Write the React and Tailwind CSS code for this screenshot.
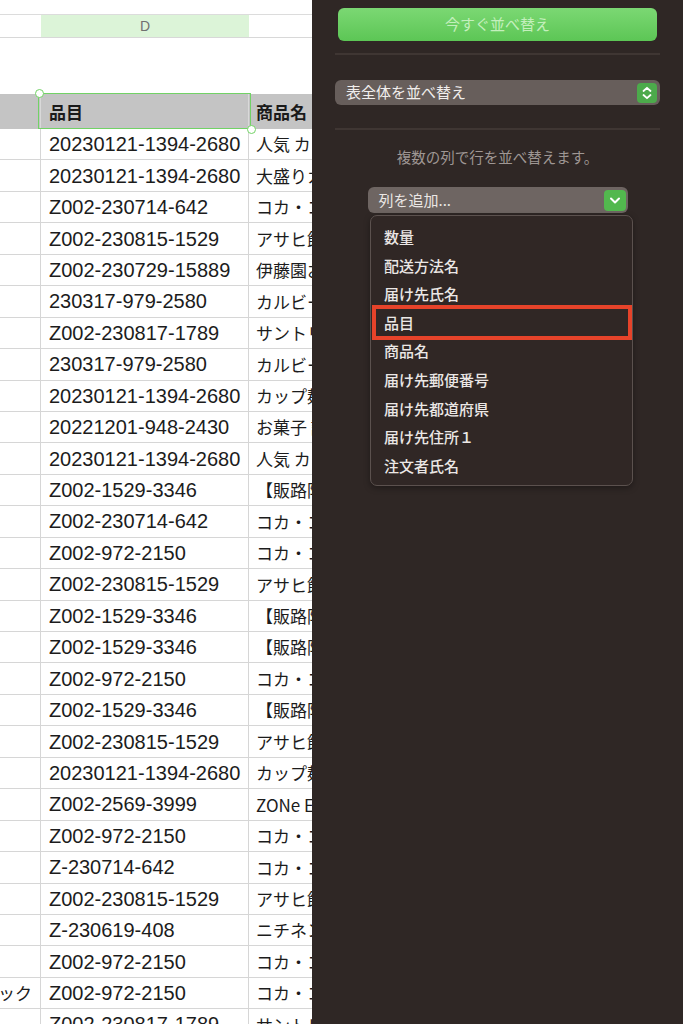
import React from "react";

const rows = [
  ["", "20230121-1394-2680", "人気 カップ麺"],
  ["", "20230121-1394-2680", "大盛りカップ"],
  ["", "Z002-230714-642", "コカ・コーラ"],
  ["", "Z002-230815-1529", "アサヒ飲料"],
  ["", "Z002-230729-15889", "伊藤園お茶"],
  ["", "230317-979-2580", "カルビーポテト"],
  ["", "Z002-230817-1789", "サントリー"],
  ["", "230317-979-2580", "カルビーポテト"],
  ["", "20230121-1394-2680", "カップ麺セット"],
  ["", "20221201-948-2430", "お菓子 詰め合わせ"],
  ["", "20230121-1394-2680", "人気 カップ麺"],
  ["", "Z002-1529-3346", "【販路限定】"],
  ["", "Z002-230714-642", "コカ・コーラ"],
  ["", "Z002-972-2150", "コカ・コーラ"],
  ["", "Z002-230815-1529", "アサヒ飲料"],
  ["", "Z002-1529-3346", "【販路限定】"],
  ["", "Z002-1529-3346", "【販路限定】"],
  ["", "Z002-972-2150", "コカ・コーラ"],
  ["", "Z002-1529-3346", "【販路限定】"],
  ["", "Z002-230815-1529", "アサヒ飲料"],
  ["", "20230121-1394-2680", "カップ麺セット"],
  ["", "Z002-2569-3999", "ZONe ENERGY"],
  ["", "Z002-972-2150", "コカ・コーラ"],
  ["", "Z-230714-642", "コカ・コーラ"],
  ["", "Z002-230815-1529", "アサヒ飲料"],
  ["", "Z-230619-408", "ニチネンコンロ"],
  ["", "Z002-972-2150", "コカ・コーラ"],
  ["ック", "Z002-972-2150", "コカ・コーラ"],
  ["", "Z002-230817-1789", "サントリー"],
];

const menuItems = [
  "数量",
  "配送方法名",
  "届け先氏名",
  "品目",
  "商品名",
  "届け先郵便番号",
  "届け先都道府県",
  "届け先住所１",
  "注文者氏名",
];

const jp = "font-['Noto_Sans_CJK_JP',sans-serif]";

function Sheet() {
  return (
    <div className="w-[312px] shrink-0 overflow-hidden bg-white">
      <div className="w-[480px]">
        <div className="h-[15px] border-b border-[#dcdcdc]" />
        <div className="flex h-[23px] border-b border-[#d8d8d8]">
          <div className="w-[41px]" />
          <div className="flex w-[208px] items-center justify-center bg-[#dcf4d8] font-['Liberation_Sans',sans-serif] text-[14px] text-[#707070]">
            D
          </div>
          <div className="flex-1" />
        </div>
        <div className="h-[56px]" />

        <div className={`relative flex h-[35px] bg-[#c4c4c4] ${jp} text-[17px] font-bold text-[#1a1a1a]`}>
          <div className="w-[41px] border-r border-[#d9d9d9]" />
          <div className="flex w-[208px] items-center border-r border-[#d9d9d9] pl-[8px]">品目</div>
          <div className="flex flex-1 items-center pl-[7px]">商品名</div>
          <div className="absolute left-[38px] top-[-1px] h-[36px] w-[213px] border-[1.5px] border-[#72d266]" />
          <div className="absolute left-[34.5px] top-[-5px] h-[9px] w-[9px] rounded-full border-[1.5px] border-[#72d266] bg-white" />
          <div className="absolute left-[246.5px] top-[30.5px] h-[9px] w-[9px] rounded-full border-[1.5px] border-[#72d266] bg-white" />
        </div>

        {rows.map((r, i) => (
          <div key={i} className="flex h-[31.44px] border-b border-[#d6d6d6] text-[#1c1c1c]">
            <div className={`flex w-[41px] items-center justify-end overflow-hidden whitespace-nowrap border-r border-[#d6d6d6] pr-[8px] ${jp} text-[17px]`}>
              {r[0]}
            </div>
            <div className="flex w-[208px] items-center whitespace-nowrap border-r border-[#d6d6d6] pl-[8px] font-['Liberation_Sans',sans-serif] text-[20px]">
              {r[1]}
            </div>
            <div className={`flex flex-1 items-center whitespace-nowrap pl-[7px] ${jp} text-[17px]`}>{r[2]}</div>
          </div>
        ))}
      </div>
    </div>
  );
}

function Stepper() {
  return (
    <svg viewBox="0 0 20 20" className="h-[20px] w-[20px]">
      <path d="M6.5 8 L10 4.8 L13.5 8" fill="none" stroke="white" strokeWidth="1.8" strokeLinecap="round" strokeLinejoin="round" />
      <path d="M6.5 12 L10 15.2 L13.5 12" fill="none" stroke="white" strokeWidth="1.8" strokeLinecap="round" strokeLinejoin="round" />
    </svg>
  );
}

function Chevron() {
  return (
    <svg viewBox="0 0 22 21" className="h-[21px] w-[22px]">
      <path d="M7 8.5 L11 12.5 L15 8.5" fill="none" stroke="white" strokeWidth="2" strokeLinecap="round" strokeLinejoin="round" />
    </svg>
  );
}

function Panel() {
  return (
    <div className={`flex h-[1024px] flex-1 flex-col bg-[#2f2725] px-[23px] pt-[8px] ${jp}`}>
      <button className="mx-[3px] flex h-[33px] items-center justify-center rounded-[6px] bg-gradient-to-b from-[#7bd873] to-[#5cc655] text-[15px] text-[#c4efbd]">
        今すぐ並べ替え
      </button>
      <div className="mt-[12px] h-[2px] bg-[#3f3633]" />

      <div className="mt-[25px] flex h-[25px] items-center justify-between rounded-[6px] bg-[#675e5b] pl-[11px] pr-[3px] text-[15px] text-[#f1eeed]">
        <span>表全体を並べ替え</span>
        <div className="flex h-[20px] w-[20px] items-center justify-center rounded-[4px] bg-[#4caa4b]">
          <Stepper />
        </div>
      </div>
      <div className="mt-[23px] h-[2px] bg-[#3f3633]" />

      <p className="mt-[17px] text-center text-[14.5px] leading-[20px] text-[#9f9794]">複数の列で行を並べ替えます。</p>

      <div className="mx-auto mt-[20px] flex h-[26px] w-[260px] items-center justify-between rounded-[6px] bg-[#6e6562] pl-[11px] pr-[2px] text-[15px] text-[#ebe7e5]">
        <span>列を追加...</span>
        <div className="flex h-[21px] w-[22px] items-center justify-center rounded-[4px] bg-[#52b84e]">
          <Chevron />
        </div>
      </div>

      <div className="relative ml-[35px] mt-[2px] w-[263px] rounded-[7px] border border-[#5b514e] bg-[#302725] pb-[5px] pt-[7px] shadow-[0_2px_6px_rgba(0,0,0,0.35)]">
        {menuItems.map((m) => (
          <div key={m} className="flex h-[28.6px] items-center pl-[13px] text-[15px] font-medium text-[#ebe7e5]">
            {m}
          </div>
        ))}
        <div className="absolute left-[1px] top-[89px] h-[35px] w-[260px] border-[4px] border-[#e6432a]" />
      </div>
    </div>
  );
}

export default function App() {
  return (
    <div className="flex h-[1024px] w-[683px] overflow-hidden bg-white">
      <Sheet />
      <Panel />
    </div>
  );
}
